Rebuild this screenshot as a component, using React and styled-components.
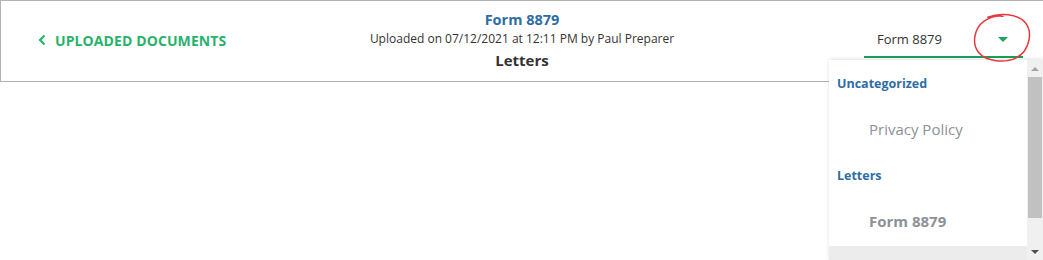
import React from 'react';
import styled, { createGlobalStyle } from 'styled-components';

const GlobalStyle = createGlobalStyle`
  html, body {
    margin: 0;
    padding: 0;
    background: #ffffff;
    font-family: "Open Sans", "Noto Sans", sans-serif;
  }
`;

const Page = styled.div`
  position: relative;
  width: 1043px;
  height: 260px;
  overflow: hidden;
`;

const Header = styled.header`
  display: grid;
  grid-template-columns: 1fr auto 1fr;
  height: 80px;
  border: 1px solid #b3b3b3;
  border-right: none;
  box-sizing: content-box;
`;

const BackLink = styled.a`
  display: flex;
  align-items: center;
  gap: 9px;
  padding-left: 37px;
  margin-top: -2px;
  color: #27b36b;
  font-size: 14px;
  font-weight: 700;
  letter-spacing: 0.1px;
  text-transform: uppercase;
  text-decoration: none;
  cursor: pointer;
`;

const Center = styled.div`
  display: flex;
  flex-direction: column;
  align-items: center;
  padding-top: 8px;
`;

const DocTitle = styled.div`
  color: #2e6da4;
  font-size: 14.5px;
  font-weight: 700;
  line-height: 21px;
`;

const Meta = styled.div`
  color: #333333;
  font-size: 12px;
  line-height: 18px;
`;

const Category = styled.div`
  color: #333333;
  font-size: 15px;
  font-weight: 700;
  line-height: 24px;
`;

const RightCol = styled.div`
  display: flex;
  justify-content: flex-end;
  align-items: flex-start;
  padding-right: 20px;
  position: relative;
  z-index: 2;
`;

const SelectField = styled.div`
  display: flex;
  align-items: center;
  justify-content: space-between;
  width: 159px;
  height: 36px;
  margin-top: 21px;
  padding: 0 15px 0 13px;
  box-sizing: border-box;
  border-bottom: 2px solid #1a9c5b;
  color: #333333;
  font-size: 13px;
  background: #ffffff;
`;

const Caret = styled.span`
  width: 0;
  height: 0;
  border-left: 5px solid transparent;
  border-right: 5px solid transparent;
  border-top: 5px solid #1fa463;
`;

const Menu = styled.div`
  position: absolute;
  top: 60px;
  right: 0;
  width: 214px;
  height: 200px;
  display: flex;
  background: #ffffff;
  box-shadow: 0 -1px 4px rgba(0, 0, 0, 0.12);
  z-index: 1;
`;

const MenuList = styled.ul`
  flex: 1;
  list-style: none;
  margin: 0;
  padding: 0;
  overflow: hidden;
`;

const GroupLabel = styled.li`
  display: flex;
  align-items: center;
  height: 46px;
  padding-left: 8px;
  color: #2e6da4;
  font-size: 12.5px;
  font-weight: 700;
`;

const Option = styled.li`
  display: flex;
  align-items: center;
  height: 46px;
  padding-left: 40px;
  color: #8c9198;
  font-size: 15px;
  font-weight: ${p => (p.$selected ? 700 : 400)};
  background: ${p => (p.$hover ? '#ececec' : 'transparent')};
  margin-top: ${p => (p.$hover ? '2px' : '0')};
`;

const Scrollbar = styled.div`
  display: flex;
  flex-direction: column;
  width: 16px;
  background: #f0f0f0;
`;

const ArrowButton = styled.div`
  display: flex;
  align-items: center;
  justify-content: center;
  height: 17px;

  &::after {
    content: '';
    border-left: 4px solid transparent;
    border-right: 4px solid transparent;
    ${p =>
      p.$down
        ? 'border-top: 4px solid #505050;'
        : 'border-bottom: 4px solid #a3a3a3;'}
  }
`;

const Thumb = styled.div`
  height: 141px;
  margin: 0 1px;
  background: #c1c1c1;
`;

const Track = styled.div`
  flex: 1;
`;

const Annotation = styled.svg`
  position: absolute;
  left: 969px;
  top: 11px;
  pointer-events: none;
  z-index: 3;
`;

const ChevronLeft = () => (
  <svg width="8" height="12" viewBox="0 0 8 12">
    <path d="M6.5 1.5 L2 6 L6.5 10.5" fill="none" stroke="#27b36b" strokeWidth="2.2" />
  </svg>
);

const App = () => (
  <Page>
    <GlobalStyle />
    <Header>
      <BackLink>
        <ChevronLeft />
        Uploaded Documents
      </BackLink>
      <Center>
        <DocTitle>Form 8879</DocTitle>
        <Meta>Uploaded on 07/12/2021 at 12:11 PM by Paul Preparer</Meta>
        <Category>Letters</Category>
      </Center>
      <RightCol>
        <SelectField>
          Form 8879
          <Caret />
        </SelectField>
      </RightCol>
    </Header>

    <Menu>
      <MenuList>
        <GroupLabel>Uncategorized</GroupLabel>
        <Option>Privacy Policy</Option>
        <GroupLabel>Letters</GroupLabel>
        <Option $selected>Form 8879</Option>
        <Option $hover />
      </MenuList>
      <Scrollbar>
        <ArrowButton />
        <Thumb />
        <Track />
        <ArrowButton $down />
      </Scrollbar>
    </Menu>

    <Annotation width="66" height="56" viewBox="0 0 70 58">
      <path
        d="M20 6 C32 1 52 2 60 12 C68 22 64 42 50 49 C38 55 18 53 10 43 C3 34 5 18 16 10 C22 6 30 4 36 5"
        fill="none"
        stroke="#e8383b"
        strokeWidth="1.6"
        strokeLinecap="round"
      />
    </Annotation>
  </Page>
);

export default App;
